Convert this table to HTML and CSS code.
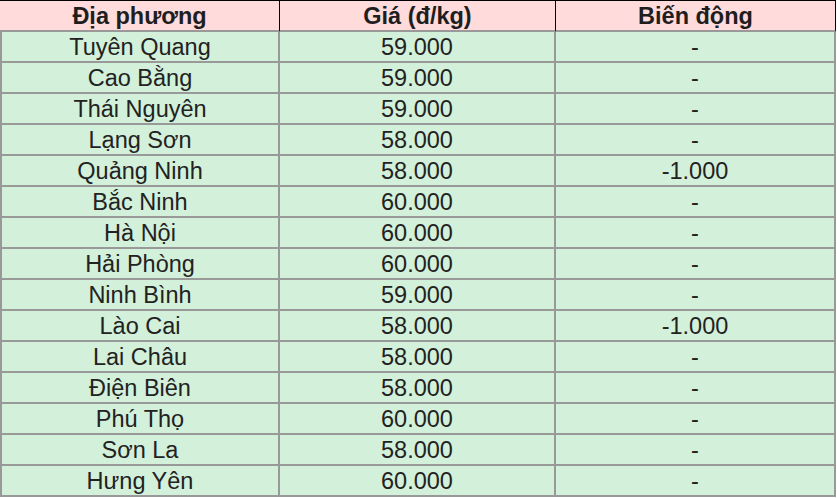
FILE: index.html
```html
<!DOCTYPE html>
<html lang="vi">
<head>
<meta charset="utf-8">
<title>Giá lợn hơi</title>
<link rel="stylesheet" href="styles.css">
</head>
<body>
<table class="price-table">
  <colgroup>
    <col class="col-a">
    <col class="col-b">
    <col class="col-c">
  </colgroup>
  <thead>
    <tr>
      <th>Địa phương</th>
      <th>Giá (đ/kg)</th>
      <th>Biến động</th>
    </tr>
  </thead>
  <tbody>
    <tr><td>Tuyên Quang</td><td>59.000</td><td>-</td></tr>
    <tr><td>Cao Bằng</td><td>59.000</td><td>-</td></tr>
    <tr><td>Thái Nguyên</td><td>59.000</td><td>-</td></tr>
    <tr><td>Lạng Sơn</td><td>58.000</td><td>-</td></tr>
    <tr><td>Quảng Ninh</td><td>58.000</td><td>-1.000</td></tr>
    <tr><td>Bắc Ninh</td><td>60.000</td><td>-</td></tr>
    <tr><td>Hà Nội</td><td>60.000</td><td>-</td></tr>
    <tr><td>Hải Phòng</td><td>60.000</td><td>-</td></tr>
    <tr><td>Ninh Bình</td><td>59.000</td><td>-</td></tr>
    <tr><td>Lào Cai</td><td>58.000</td><td>-1.000</td></tr>
    <tr><td>Lai Châu</td><td>58.000</td><td>-</td></tr>
    <tr><td>Điện Biên</td><td>58.000</td><td>-</td></tr>
    <tr><td>Phú Thọ</td><td>60.000</td><td>-</td></tr>
    <tr><td>Sơn La</td><td>58.000</td><td>-</td></tr>
    <tr><td>Hưng Yên</td><td>60.000</td><td>-</td></tr>
  </tbody>
</table>
</body>
</html>
```
FILE: styles.css
```css
html, body {
  margin: 0;
  padding: 0;
  background: #ffffff;
}

.price-table {
  width: 836px;
  table-layout: fixed;
  border-collapse: separate;
  border-spacing: 0;
  font-family: "Liberation Sans", Arial, sans-serif;
  font-size: 23.5px;
  color: #222222;
}

.col-a { width: 280px; }
.col-b { width: 276px; }
.col-c { width: 280px; }

.price-table th,
.price-table td {
  padding: 0;
  text-align: center;
  vertical-align: middle;
  line-height: 26px;
  white-space: nowrap;
  overflow: hidden;
}

.price-table th {
  height: 29px;
  background: #ffdbdb;
  font-weight: bold;
  color: #1e1e1e;
  border-top: 1px solid #000000;
  border-right: 1px solid #000000;
  border-bottom: 2px solid #999999;
}

.price-table th:first-child {
  border-left: 0;
}

.price-table td {
  height: 29px;
  background: #d3f0da;
  border-right: 2px solid #999999;
  border-bottom: 2px solid #999999;
}

.price-table td:first-child {
  border-left: 2px solid #999999;
}
```
